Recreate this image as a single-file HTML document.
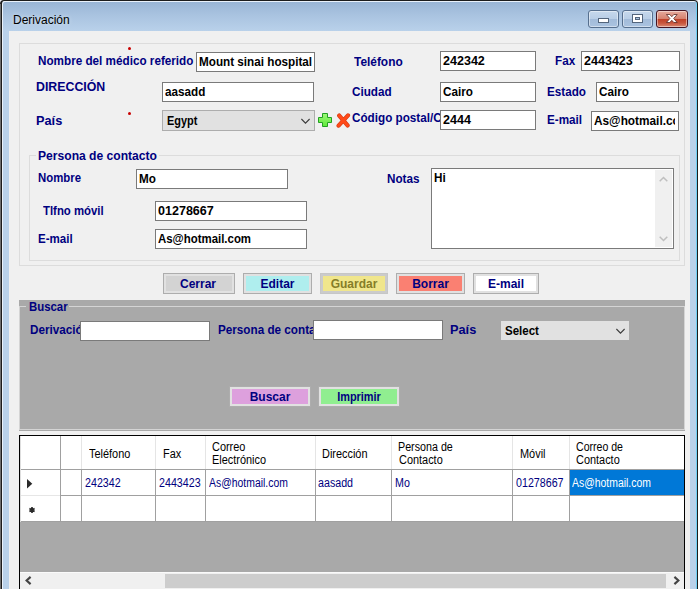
<!DOCTYPE html>
<html>
<head>
<meta charset="utf-8">
<style>
html,body{margin:0;padding:0;}
body{width:698px;height:589px;overflow:hidden;background:#e4e6ee;position:relative;font-family:"Liberation Sans",sans-serif;}
div,span{position:absolute;box-sizing:border-box;}
#frame{left:0;top:0;width:698px;height:600px;border:1px solid #1c1c1c;border-left-width:2px;border-radius:4px 4px 0 0;box-shadow:inset 1px 1px 0 #e9f1fa,inset -1px 0 0 #6fd0f5;background:linear-gradient(#98b4d4 0px,#a9c3e0 14px,#b9d1ea 30px,#b9d1ea 100%);}
#client{left:9px;top:31px;width:681px;height:558px;background:#f0f0f0;}
.lbl{color:#000080;font-weight:bold;font-size:12px;line-height:14px;white-space:pre;transform:scaleX(.975);transform-origin:0 50%;}
.tb{background:#fff;border:1px solid #7a7a7a;height:20px;overflow:hidden;}
.tb span{left:2px;top:2px;color:#000;font-weight:bold;font-size:12px;line-height:14px;white-space:pre;transform:scaleX(.975);transform-origin:0 50%;}
.gb{border:1px solid #dcdcdc;}
.cb{top:10px;height:18px;border:1px solid #566f8e;border-radius:3px;background:linear-gradient(#c6d8ec 0,#b9cee6 48%,#a2bbd9 50%,#aac3e0 100%);box-shadow:inset 0 0 0 1px rgba(255,255,255,.45);}
.btn{border:1px solid #adadad;background:#e1e1e1;}
.btn i{position:absolute;left:2px;top:2px;right:2px;bottom:2px;display:block;}
.btn b{position:absolute;left:0;right:0;top:0;bottom:0;text-align:center;color:#000080;font-size:12px;line-height:21px;font-weight:bold;}
.g{font-size:12px;color:#000;line-height:13px;white-space:pre;transform:scaleX(.91);transform-origin:0 50%;}
.gv{font-size:12px;color:#000080;line-height:13px;white-space:pre;transform:scaleX(.89);transform-origin:0 50%;}
.vl{width:1px;background:#a0a0a0;}
.hl{height:1px;background:#a0a0a0;}
</style>
</head>
<body>
<div id="frame"></div>
<div style="left:0;top:4px;width:1px;height:590px;background:#6e6e6e"></div>
<!-- title -->
<span style="left:13px;top:13px;font-size:12px;line-height:14px;color:#000;white-space:pre;text-shadow:0 0 4px rgba(255,255,255,.6)">Derivación</span>
<!-- caption buttons -->
<div class="cb" style="left:588px;width:31px;"><svg style="position:absolute;left:9px;top:7px" width="12" height="6" viewBox="0 0 12 6"><rect x="0.5" y="0.5" width="10" height="4" fill="#fff" stroke="#53657c" stroke-width="1"/></svg></div>
<div class="cb" style="left:622px;width:31px;"><svg style="position:absolute;left:9px;top:3px" width="13" height="10" viewBox="0 0 13 10"><rect x="0.5" y="0.5" width="10" height="8" fill="#fff" stroke="#53657c" stroke-width="1"/><rect x="3.5" y="3.5" width="4" height="2" fill="#a9c2df" stroke="#53657c" stroke-width="1"/></svg></div>
<div class="cb" style="left:656px;width:32px;border-color:#451523;background:linear-gradient(#e6aa9c 0,#d6826f 48%,#bf3f27 50%,#c8553c 75%,#d98a74 100%)"><svg style="position:absolute;left:9px;top:3px" width="13" height="10" viewBox="0 0 13 10"><path d="M0.4 0.5 L3.8 0.5 L5.8 2.7 L7.8 0.5 L11.2 0.5 L7.7 4.5 L11.2 8.5 L7.8 8.5 L5.8 6.3 L3.8 8.5 L0.4 8.5 L3.9 4.5 Z" fill="#fff" stroke="#5a2a24" stroke-width="0.8"/></svg></div>

<div id="client">
<div class="gb" style="left:10px;top:12px;width:666px;height:223px"></div>
<div style="left:119px;top:16px;width:3px;height:3px;border-radius:1.5px;background:#c80000"></div>
<div style="left:119px;top:81px;width:3px;height:3px;border-radius:1.5px;background:#c80000"></div>
<span class="lbl" style="left:29px;top:23px;">Nombre del médico referido</span>
<div class="tb" style="left:187px;top:21px;width:119px;height:20px;"><span>Mount sinai hospital</span></div>
<span class="lbl" style="left:345px;top:23.5px;transform:scaleX(0.991);">Teléfono</span>
<div class="tb" style="left:431px;top:20px;width:96px;height:20px;"><span style="transform:scaleX(1.045)">242342</span></div>
<span class="lbl" style="left:546px;top:23px;">Fax</span>
<div class="tb" style="left:572px;top:20px;width:99px;height:20px;"><span style="transform:scaleX(1.045)">2443423</span></div>
<span class="lbl" style="left:26.5px;top:49px;transform:scaleX(1.029);">DIRECCIÓN</span>
<div class="tb" style="left:153px;top:51px;width:152px;height:20px;"><span>aasadd</span></div>
<span class="lbl" style="left:343.3px;top:53.5px;transform:scaleX(0.975);">Ciudad</span>
<div class="tb" style="left:431px;top:51px;width:96px;height:20px;"><span>Cairo</span></div>
<span class="lbl" style="left:538px;top:53.5px;">Estado</span>
<div class="tb" style="left:587px;top:51px;width:83px;height:20px;"><span>Cairo</span></div>
<span class="lbl" style="left:27px;top:82.5px;transform:scaleX(1.062);">País</span>
<div style="left:153px;top:79px;width:153px;height:21px;background:#e1e1e1;border:1px solid #adadad"><span style="left:3.5px;top:2px;font-weight:bold;font-size:12px;line-height:16px;color:#000;transform:scaleX(.91);transform-origin:0 50%">Egypt</span><svg style="position:absolute;right:3px;top:7px" width="11" height="7" viewBox="0 0 11 7"><path d="M1.4 1 L5.5 5.1 L9.6 1" fill="none" stroke="#3a3a3a" stroke-width="1.1"/></svg></div>
<svg style="position:absolute;left:309px;top:82px" width="15" height="15" viewBox="0 0 15 15"><defs><linearGradient id="gp" x1="0" y1="0" x2="0" y2="1"><stop offset="0" stop-color="#9cfa78"/><stop offset="1" stop-color="#5fe83a"/></linearGradient></defs><path d="M4.5 0.5h5v4h4v5h-4v4h-5v-4h-4v-5h4z" fill="url(#gp)" stroke="#22a022" stroke-width="1" stroke-linejoin="round"/></svg>
<svg style="position:absolute;left:327px;top:82px" width="15" height="15" viewBox="0 0 15 15"><path d="M3.2 2.6 L11.6 12.4 M12 2.4 L2.6 12.6" fill="none" stroke="#d63a14" stroke-width="4.2" stroke-linecap="round"/><path d="M3.2 2.6 L11.6 12.4 M12 2.4 L2.6 12.6" fill="none" stroke="#ff4a18" stroke-width="3" stroke-linecap="round"/></svg>
<span class="lbl" style="left:343px;top:80px;">Código postal/Ciudad</span>
<div class="tb" style="left:431px;top:79px;width:96px;height:20px;"><span style="transform:scaleX(1.045)">2444</span></div>
<span class="lbl" style="left:538px;top:82px;">E-mail</span>
<div class="tb" style="left:582px;top:80px;width:88px;height:20px;"><span style="transform:scaleX(0.985)">As@hotmail.com</span><div style="right:0;top:0;width:3px;height:18px;background:#fff"></div></div>
<div class="gb" style="left:20px;top:124px;width:651px;height:106px"></div>
<span class="lbl" style="left:27px;top:118px;background:#f0f0f0;padding:0 2px;transform:scaleX(1.008);">Persona de contacto</span>
<span class="lbl" style="left:29px;top:140px;transform:scaleX(0.948);">Nombre</span>
<div class="tb" style="left:127px;top:138px;width:152px;height:20px;"><span>Mo</span></div>
<span class="lbl" style="left:34.3px;top:172.5px;transform:scaleX(0.948);">Tlfno móvil</span>
<div class="tb" style="left:146px;top:170px;width:152px;height:20px;"><span style="transform:scaleX(1.045)">01278667</span></div>
<span class="lbl" style="left:29px;top:201px;transform:scaleX(0.964);">E-mail</span>
<div class="tb" style="left:146px;top:198px;width:152px;height:20px;"><span style="transform:scaleX(0.952)">As@hotmail.com</span></div>
<span class="lbl" style="left:378px;top:141px;">Notas</span>
<div class="tb" style="left:422px;top:137px;width:243px;height:81px"><span>Hi</span><div style="right:1px;top:1px;width:17px;height:77px;background:#f0f0f0"></div><svg style="position:absolute;right:5px;top:7px" width="9" height="6" viewBox="0 0 9 6"><path d="M0.7 5.3 L4.5 1.5 L8.3 5.3" fill="none" stroke="#bfbfbf" stroke-width="1.5"/></svg><svg style="position:absolute;right:5px;bottom:6px" width="9" height="6" viewBox="0 0 9 6"><path d="M0.7 0.7 L4.5 4.5 L8.3 0.7" fill="none" stroke="#bfbfbf" stroke-width="1.5"/></svg></div>
<div class="btn" style="left:154px;top:242px;width:72px;height:21px"><i style="background:#d3d3d3"></i><b style="color:#000080;left:-2px">Cerrar</b></div>
<div class="btn" style="left:234px;top:242px;width:69px;height:21px"><i style="background:#afeeee"></i><b style="color:#000080">Editar</b></div>
<div class="btn" style="left:311px;top:242px;width:68px;height:21px;background:#cbcbcb;border-color:#c6c6c6"><i style="background:#f0e68c"></i><b style="color:#857d28">Guardar</b></div>
<div class="btn" style="left:387px;top:242px;width:69px;height:21px"><i style="background:#fa8072"></i><b style="color:#000080">Borrar</b></div>
<div class="btn" style="left:464px;top:242px;width:66px;height:21px"><i style="background:#ffffff"></i><b style="color:#000080">E-mail</b></div>
<div style="left:10px;top:269px;width:666px;height:131px;background:#a9a9a9"></div>
<div style="left:10px;top:275px;width:666px;height:124px;border:1px solid #d4d4d4"></div>
<div style="left:17px;top:275px;width:43px;height:1px;background:#a9a9a9"></div><span class="lbl" style="left:19.5px;top:268.5px;transform:scaleX(0.948);">Buscar</span>
<span class="lbl" style="left:21px;top:292px;">Derivación</span>
<div class="tb" style="left:71px;top:290px;width:130px;height:20px;"></div>
<span class="lbl" style="left:209px;top:292px;">Persona de contacto</span>
<div class="tb" style="left:304px;top:289px;width:130px;height:20px;"></div>
<span class="lbl" style="left:441px;top:292px;transform:scaleX(1.062);">País</span>
<div style="left:492px;top:290px;width:128px;height:19px;background:#e1e1e1"><span style="left:3.5px;top:2px;font-weight:bold;font-size:12px;line-height:16px;color:#000;transform:scaleX(.96);transform-origin:0 50%">Select</span><svg style="position:absolute;right:3px;top:7px" width="11" height="7" viewBox="0 0 11 7"><path d="M1.4 1 L5.5 5.1 L9.6 1" fill="none" stroke="#3a3a3a" stroke-width="1.1"/></svg></div>
<div class="btn" style="left:220px;top:355px;width:82px;height:21px"><i style="background:#dda0dd"></i><b style="color:#000080">Buscar</b></div>
<div class="btn" style="left:309px;top:355px;width:82px;height:21px"><i style="background:#90ee90"></i><b style="color:#000080;transform:scaleX(.91)">Imprimir</b></div>
<div id="grid" style="left:10px;top:404px;width:666px;height:156px;background:#a9a9a9;border:1px solid #000;overflow:hidden">
<div style="left:0;top:0;width:664px;height:33px;background:#fff"></div>
<div style="left:0;top:34px;width:664px;height:25px;background:#fff"></div>
<div style="left:0;top:60px;width:664px;height:25px;background:#fff"></div>
<div style="left:550px;top:34px;width:114px;height:25px;background:#0078d7"></div>
<div class="hl" style="left:0;top:33px;width:664px"></div>
<div class="hl" style="left:0;top:59px;width:664px"></div>
<div class="hl" style="left:0;top:85px;width:664px"></div>
<div class="vl" style="left:40px;top:0;height:33px;background:#a0a0a0"></div>
<div class="vl" style="left:40px;top:33px;height:53px"></div>
<div class="vl" style="left:61px;top:0;height:33px;background:#e5e5e5"></div>
<div class="vl" style="left:61px;top:33px;height:53px"></div>
<div class="vl" style="left:135px;top:0;height:33px;background:#e5e5e5"></div>
<div class="vl" style="left:135px;top:33px;height:53px"></div>
<div class="vl" style="left:185px;top:0;height:33px;background:#e5e5e5"></div>
<div class="vl" style="left:185px;top:33px;height:53px"></div>
<div class="vl" style="left:295px;top:0;height:33px;background:#e5e5e5"></div>
<div class="vl" style="left:295px;top:33px;height:53px"></div>
<div class="vl" style="left:371px;top:0;height:33px;background:#e5e5e5"></div>
<div class="vl" style="left:371px;top:33px;height:53px"></div>
<div class="vl" style="left:492px;top:0;height:33px;background:#e5e5e5"></div>
<div class="vl" style="left:492px;top:33px;height:53px"></div>
<div class="vl" style="left:549px;top:0;height:33px;background:#e5e5e5"></div>
<div class="vl" style="left:549px;top:33px;height:53px"></div>
<span class="g" style="left:68.5px;top:11.5px;">Teléfono</span>
<span class="g" style="left:142.5px;top:11.5px;">Fax</span>
<span class="g" style="left:192px;top:5.0px;">Correo</span>
<span class="g" style="left:192px;top:18.0px;">Electrónico</span>
<span class="g" style="left:301.5px;top:11.5px;">Dirección</span>
<span class="g" style="left:378px;top:5.0px;transform:scaleX(0.893);">Persona de</span>
<span class="g" style="left:378.5px;top:18.0px;">Contacto</span>
<span class="g" style="left:499.5px;top:11.5px;">Móvil</span>
<span class="g" style="left:555.7px;top:5.0px;transform:scaleX(0.88);">Correo de</span>
<span class="g" style="left:556px;top:18.0px;">Contacto</span>
<span class="gv" style="left:64.5px;top:40.5px;color:#000080">242342</span>
<span class="gv" style="left:138.5px;top:40.5px;color:#000080">2443423</span>
<span class="gv" style="left:189px;top:40.5px;color:#000080;transform:scaleX(0.868);">As@hotmail.com</span>
<span class="gv" style="left:297.5px;top:40.5px;color:#000080">aasadd</span>
<span class="gv" style="left:375px;top:40.5px;color:#000080">Mo</span>
<span class="gv" style="left:496px;top:40.5px;color:#000080">01278667</span>
<span class="gv" style="left:552px;top:40.5px;color:#fff;transform:scaleX(0.868);">As@hotmail.com</span>
<div style="left:0;top:59px;width:40px;height:1px;background:#e6e6e6"></div>
<div style="left:0;top:0;width:1px;height:86px;background:#dedede"></div>
<svg style="position:absolute;left:7px;top:43px" width="6" height="10" viewBox="0 0 6 10"><path d="M0 0 L5.3 4.75 L0 9.5 Z" fill="#2a2a2a"/></svg>
<svg style="position:absolute;left:8px;top:70px" width="8" height="8" viewBox="-4 -4 8 8"><path d="M0 -3 L0 3 M-2.6 -1.5 L2.6 1.5 M-2.6 1.5 L2.6 -1.5" stroke="#2a2a2a" stroke-width="1.7" fill="none"/><circle r="1.6" fill="#2a2a2a"/></svg>
<div style="left:0;top:136px;width:664px;height:17px;background:#f0f0f0"></div>
<div style="left:0;top:136px;width:664px;height:1px;background:#fafafa"></div><div style="left:145px;top:138px;width:501px;height:14px;background:#cdcdcd"></div>
<svg style="position:absolute;left:4px;top:140px" width="9" height="9" viewBox="0 0 9 9"><path d="M6.6 0.9 L2.6 4.5 L6.6 8.1" fill="none" stroke="#444" stroke-width="2.1"/></svg>
<svg style="position:absolute;left:652px;top:140px" width="9" height="9" viewBox="0 0 9 9"><path d="M2.4 0.9 L6.4 4.5 L2.4 8.1" fill="none" stroke="#444" stroke-width="2.1"/></svg>
</div>

</div>
</body>
</html>
